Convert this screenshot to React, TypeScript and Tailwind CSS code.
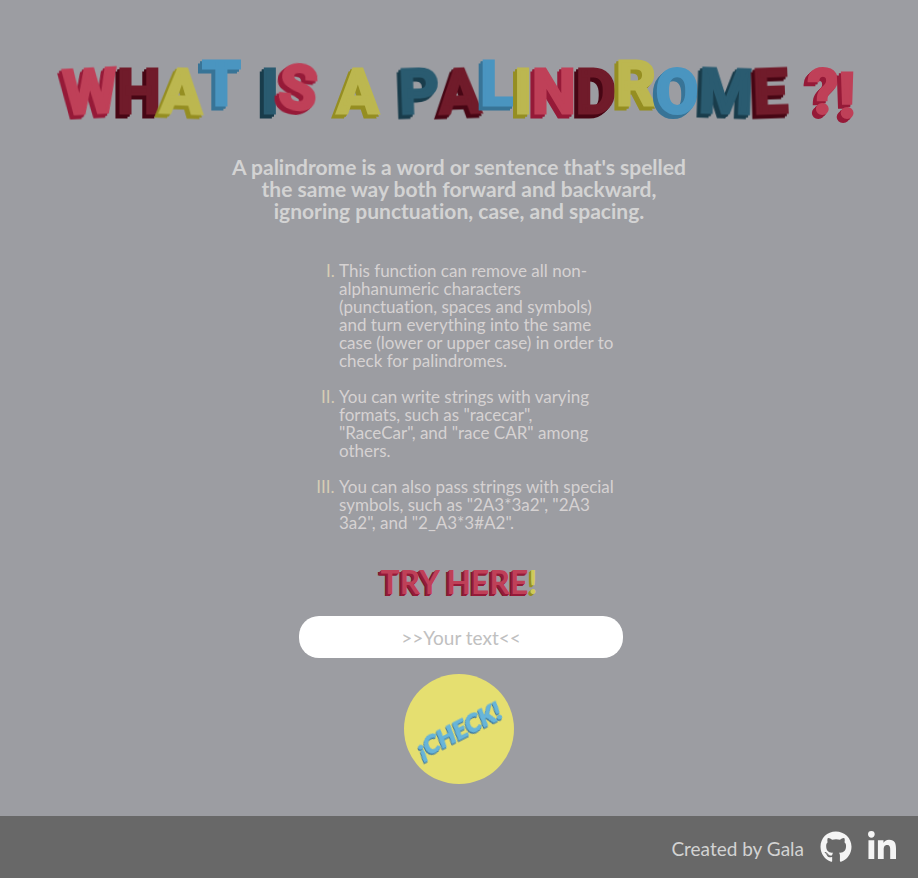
import React from "react";
import { FaGithub, FaLinkedinIn } from "react-icons/fa";

const RED = "text-[#bf4058] [-webkit-text-stroke:3px_#bf4058] [filter:drop-shadow(-2px_2px_0_#961a38)_drop-shadow(-2px_2px_0_#961a38)]";
const WINE = "text-[#701b2a] [-webkit-text-stroke:3px_#701b2a] [filter:drop-shadow(-2px_2px_0_#470614)_drop-shadow(-2px_2px_0_#470614)]";
const YELLOW = "text-[#bcb750] [-webkit-text-stroke:3px_#bcb750] [filter:drop-shadow(-2px_2px_0_#958e22)_drop-shadow(-2px_2px_0_#958e22)]";
const BLUE = "text-[#4a95c0] [-webkit-text-stroke:3px_#4a95c0] [filter:drop-shadow(-2px_2px_0_#387497)_drop-shadow(-2px_2px_0_#387497)]";
const TEAL = "text-[#2a5b70] [-webkit-text-stroke:3px_#2a5b70] [filter:drop-shadow(-2px_2px_0_#193c4b)_drop-shadow(-2px_2px_0_#193c4b)]";

type Letter = { char: string; tone: string; pose?: string };

const WORDS: Letter[][] = [
  [
    { char: "W", tone: RED, pose: "-rotate-3" },
    { char: "H", tone: WINE },
    { char: "A", tone: YELLOW, pose: "rotate-2" },
    { char: "T", tone: BLUE, pose: "-translate-y-2" },
  ],
  [
    { char: "I", tone: TEAL },
    { char: "S", tone: RED, pose: "-translate-y-1 rotate-6" },
  ],
  [{ char: "A", tone: YELLOW }],
  [
    { char: "P", tone: TEAL, pose: "-rotate-2" },
    { char: "A", tone: WINE, pose: "-rotate-2" },
    { char: "L", tone: BLUE, pose: "-translate-y-2" },
    { char: "I", tone: YELLOW },
    { char: "N", tone: RED },
    { char: "D", tone: WINE },
    { char: "R", tone: YELLOW, pose: "-translate-y-2" },
    { char: "O", tone: BLUE },
    { char: "M", tone: TEAL, pose: "rotate-2" },
    { char: "E", tone: WINE, pose: "-rotate-2" },
  ],
  [
    { char: "?", tone: RED },
    { char: "!", tone: RED, pose: "translate-y-1" },
  ],
];

function Title() {
  return (
    <h1
      aria-label="What is a palindrome ?!"
      className="flex justify-center gap-5 font-[Roboto,sans-serif] text-[62px] leading-[72px] font-bold"
    >
      {WORDS.map((word, w) => (
        <span key={w} className="flex">
          {word.map((letter, i) => (
            <span key={i} className={`block ${letter.tone} ${letter.pose ?? ""}`}>
              {letter.char}
            </span>
          ))}
        </span>
      ))}
    </h1>
  );
}

export default function App() {
  return (
    <div className="flex min-h-screen flex-col bg-[#9c9da2] font-[Lato,sans-serif] text-[#d6d2d2] [font-variant-ligatures:none]">
      <main className="flex flex-1 flex-col items-center pt-14 pb-8">
        <Title />

        <p className="mt-7 text-center text-[21px] leading-[22px] font-bold text-[#d3d3d3]">
          A palindrome is a word or sentence that's spelled
          <br />
          the same way both forward and backward,
          <br />
          ignoring punctuation, case, and spacing.
        </p>

        <ol className="mt-10 ml-10 w-[280px] list-[upper-roman] space-y-[18px] text-[17px] leading-[18px] marker:text-[#d6ccb4]">
          <li>
            This function can remove all non-
            <br />
            alphanumeric characters
            <br />
            (punctuation, spaces and symbols)
            <br />
            and turn everything into the same
            <br />
            case (lower or upper case) in order to
            <br />
            check for palindromes.
          </li>
          <li>
            You can write strings with varying
            <br />
            formats, such as "racecar",
            <br />
            "RaceCar", and "race CAR" among
            <br />
            others.
          </li>
          <li>
            You can also pass strings with special
            <br />
            symbols, such as "2A3*3a2", "2A3
            <br />
            3a2", and "2_A3*3#A2".
          </li>
        </ol>

        <form className="mt-8 flex flex-col items-center" onSubmit={(e) => e.preventDefault()}>
          <label
            htmlFor="text"
            className="text-[32px] leading-[36px] font-bold text-[#bf4058] [text-shadow:-1px_1px_0_#961a38,-2px_2px_0_#961a38,-3px_2px_0_#701b2a]"
          >
            TRY HERE
            <span className="text-[#d0ca58] [text-shadow:-1px_1px_0_#958e22,-2px_2px_0_#958e22]">!</span>
          </label>
          <input
            id="text"
            type="text"
            placeholder=">>Your text<<"
            className="mt-4 ml-1 h-[42px] w-[324px] rounded-[20px] bg-white text-center text-[19px] text-[#555] outline-none placeholder:text-[#c0c0c0]"
          />
          <button
            type="submit"
            className="mt-4 flex size-[110px] items-center justify-center rounded-full bg-[#e5df70]"
          >
            <span className="block -rotate-[27deg] text-[25px] leading-[28px] font-black text-[#67b5d9] italic [-webkit-text-stroke:1px_#67b5d9] [filter:drop-shadow(-1px_1px_0_#3a749c)]">
              ¡CHECK!
            </span>
          </button>
        </form>
      </main>

      <footer className="flex h-[62px] items-center justify-end bg-[#686868] pr-5">
        <p className="mt-1 mr-4 text-[19px] leading-[22px] text-[#d3d3d3]">Created by Gala</p>
        <a href="#github" aria-label="GitHub" className="mr-3.5 text-[32px] text-[#f5f5f5]">
          <FaGithub />
        </a>
        <a href="#linkedin" aria-label="LinkedIn" className="text-[32px] text-[#f5f5f5]">
          <FaLinkedinIn />
        </a>
      </footer>
    </div>
  );
}
